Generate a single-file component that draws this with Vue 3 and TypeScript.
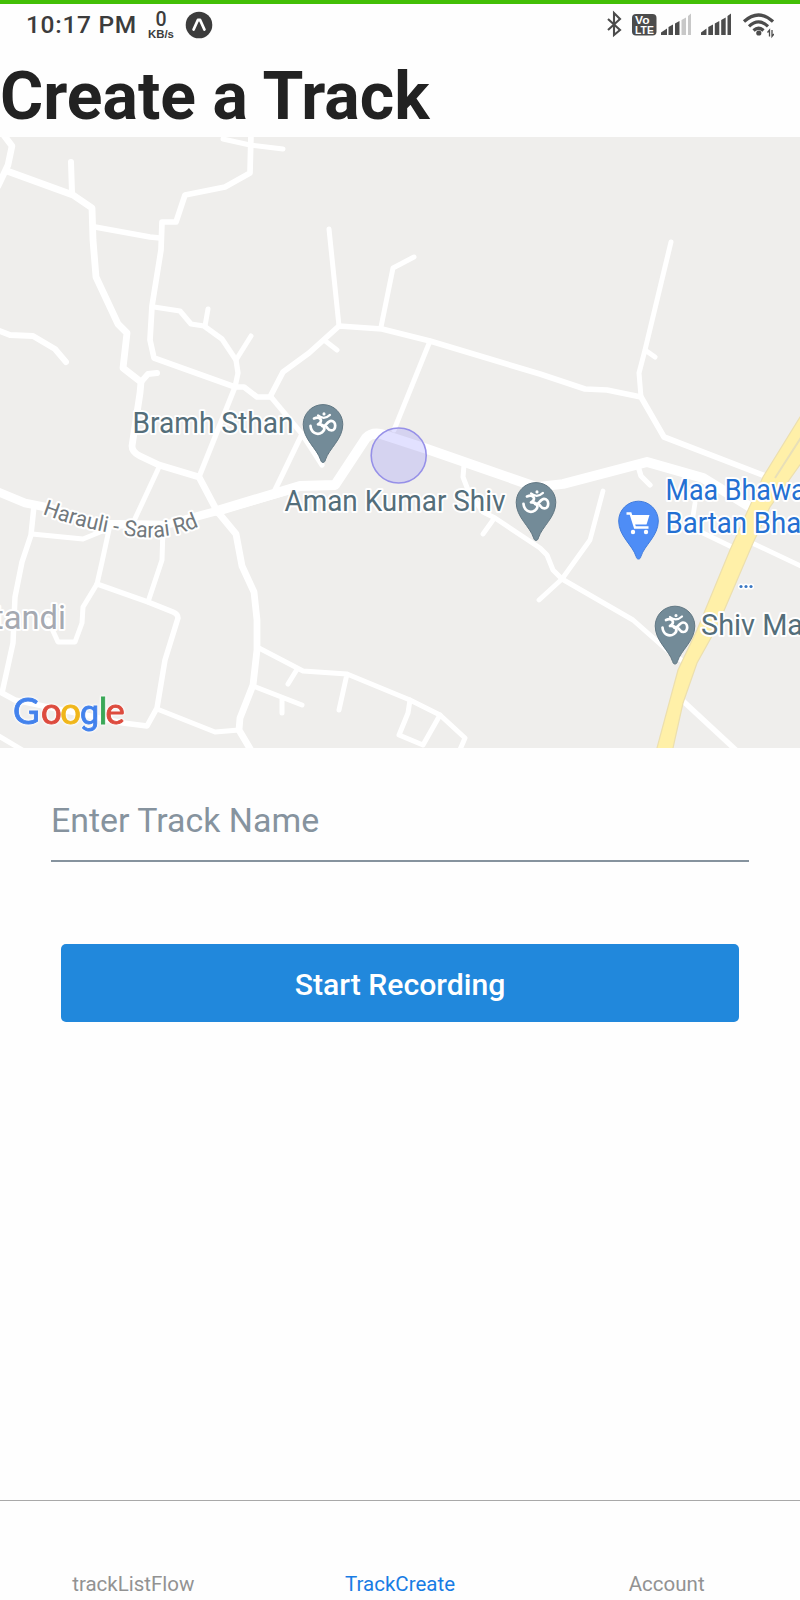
<script setup lang="ts">
import { ref } from 'vue'

interface Road { d: string; w: number }
interface Pin { x: number; y: number; kind: 'temple' | 'shop' }
interface Label { x: number; y: number; width?: number; text: string; tone: string }

const trackName = ref('')
const activeTab = ref('TrackCreate')
const tabs = ['trackListFlow', 'TrackCreate', 'Account']

const roads: Road[] = [
  { d: 'M3 134L12 146L8 165L-2 186', w: 6.5 },
  { d: 'M7 171L73 195L92 208L93 240L96 277L118 324L127 333L123 368L141 382L140 393L132 446Q132 452 140 456L159 465L199 477L217 511L236 534L242 566L254 592L257 620L257 650L253 685L240 718L239 730L252 752', w: 6.8 },
  { d: 'M71 162L72 193', w: 6 },
  { d: 'M141 382L148 374L157 373', w: 6 },
  { d: 'M95 227L150 237L160 238', w: 5.5 },
  { d: 'M251 134L250 173L225 187L185 195L176 222L162 222L161 250L152 306L150 340L154 358L235 387L244 387L257 397L270 397L283 372L309 353L339 326L382 329L430 341L540 374L585 389L607 390L641 397L664 437L768 477', w: 5.7 },
  { d: 'M223 139L250 145L283 149', w: 5 },
  { d: 'M154 307L180 311L191 324L204 326L222 339L236 360L238 373L235 387L199 477', w: 5.3 },
  { d: 'M205 326L208 309M236 360L251 336', w: 5 },
  { d: 'M-3 330L10 335L33 336L55 349L66 362', w: 6 },
  { d: 'M329 229L339 326M381 327L393 268L414 257M324 340L337 350M430 341L394 430', w: 5 },
  { d: 'M271 397L302 434L322 465M302 434L275 490', w: 5.2 },
  { d: 'M-4 491L25 503L50 508L100 524L165 525L217 511L290 490', w: 8.5 },
  { d: 'M217 511L250 501L300 486L335 485L366 438Q372 432 381 434L427 449L536 487L563 484L647 462L703 478L755 510', w: 9.8 },
  { d: 'M464 465L463 477L468 490L483 512L495 518L540 548L547 555L553 570L562 579L633 620L667 650L684 662', w: 5 },
  { d: 'M493 520L483 534M539 600L562 579L590 540L603 491', w: 4.8 },
  { d: 'M638 466L641 476L650 485', w: 5.3 },
  { d: 'M671 242L645 350L639 373L641 397M645 350L655 357', w: 5 },
  { d: 'M695 503L692 523L703 533L734 548M750 542L803 567', w: 4.8 },
  { d: 'M683 701L738 752', w: 5.5 },
  { d: 'M34 506L31 535L22 562L15 597L13 643L2 693L15 700L123 723L147 726L157 708L165 660L178 618Q178 614 173 612L148 602L97 584', w: 5.5 },
  { d: 'M48 620L58 642L75 642L82 623L83 607L97 584L102 562L110 525', w: 5 },
  { d: 'M32 534L83 539L105 530M160 465L133 523M163 528L162 560L148 602M157 709L215 732L239 730', w: 5 },
  { d: 'M-3 735L24 751', w: 5 },
  { d: 'M257 647L303 671L347 674L410 700L440 715L465 738L459 752M347 674L339 710M296 671L288 684', w: 5 },
  { d: 'M253 686L302 705M282 699L282 713M410 700L408 713L399 735L423 745L440 715', w: 5 },
]

const pins: Pin[] = [
  { x: 323, y: 424.4, kind: 'temple' },
  { x: 536, y: 502.4, kind: 'temple' },
  { x: 638.5, y: 521, kind: 'shop' },
  { x: 675, y: 626, kind: 'temple' },
]

const labels: Label[] = [
  { x: 132.5, y: 433, width: 161, text: 'Bramh Sthan', tone: 'place' },
  { x: 284.5, y: 511, width: 221, text: 'Aman Kumar Shiv', tone: 'place' },
  { x: 701, y: 634.5, width: 118, text: 'Shiv Man', tone: 'place' },
  { x: 665.5, y: 499.5, width: 155, text: 'Maa Bhawan', tone: 'shop' },
  { x: 665.5, y: 533, width: 151, text: 'Bartan Bhan', tone: 'shop' },
  { x: -7, y: 629, width: 73, text: 'tandi', tone: 'area' },
]
</script>

<template>
  <div class="screen">
    <header class="status">
      <div class="status-group">
        <span class="clock">10:17 PM</span>
        <span class="rate"><b>0</b><small>KB/s</small></span>
        <svg class="badge" width="28" height="28" viewBox="0 0 28 28">
          <circle cx="14" cy="14" r="13.3" fill="#3c3c3c" />
          <path d="M8.6 18.5L12.9 9H15.1L19.4 18.5" fill="none" stroke="#fff" stroke-width="2.8" stroke-linejoin="round" stroke-linecap="round" />
        </svg>
      </div>
      <svg class="signals" width="170" height="30" viewBox="604 10 170 30">
        <path d="M608 19L620 30L614 35V13L620 19L608 30" fill="none" stroke="#4c4c4c" stroke-width="2.1" />
        <rect x="632" y="14" width="24.5" height="21.500" rx="4" fill="#4c4c4c" />
        <text x="635" y="23.8" class="volte" textLength="14.500" lengthAdjust="spacingAndGlyphs">Vo</text>
        <text x="635" y="33.6" class="volte" textLength="18.800" lengthAdjust="spacingAndGlyphs">LTE</text>
        <g fill="#4c4c4c">
          <path d="M661 35V32.500L667 28.500V35ZM668.500 35V27L673 24.500V35ZM675 35V23.500L679.500 21V35Z" />
          <path d="M681.500 35V20L686 17.500V35ZM688 35V16L691 13.500V35Z" fill="#c8c8c8" />
          <path d="M701 35V32.500L706.500 28.500V35ZM708.300 35V27L713 24.500V35ZM714.800 35V23.500L719.300 21V35ZM721.200 35V20L725.700 17.500V35ZM727.500 35V16L731 13.500V35Z" />
        </g>
        <g fill="none" stroke="#4c4c4c" stroke-width="3.200">
          <path d="M744 21.500Q758.500 8.500 773 21.500" />
          <path d="M749 26.300Q758.500 17.500 768 26.300" />
          <path d="M753.500 30.500Q758.500 26 763.500 30.500" />
        </g>
        <circle cx="758.800" cy="33" r="2.600" fill="#4c4c4c" />
        <path d="M769.500 36.500V30L767.500 32.500M772 30V36.500L774 34" fill="none" stroke="#4c4c4c" stroke-width="1.300" />
      </svg>
    </header>

    <h1>Create a Track</h1>

    <svg class="map" width="800" height="611" viewBox="0 137 800 611">
      <defs>
        <path id="road-name" d="M42 514Q80 528 116 534T166 536Q184 534 204 524" />
        <g id="om" fill="none" stroke="#fff" stroke-width="2.700" stroke-linecap="round" stroke-linejoin="round">
          <path d="M-9 -6C-3 -8.500 1 -3.500 -5 0C2 -.5 3 5 -1 8C-6 11.500 -12 8 -12.500 1.500" />
          <path d="M-1 1.500C2 4 4 -3.500 8 -3.500C13.500 -3.500 13.500 6 8.500 6C5 6 4.500 3 3.500 2.500" />
          <path d="M-5 -9Q1 -4 7 -9.500" stroke-width="2.200" />
          <circle cx="1" cy="-10.500" r=".7" stroke-width="1.700" />
        </g>
      </defs>
      <rect x="0" y="137" width="800" height="611" fill="#efeeec" />
      <g fill="none" stroke="#fff" stroke-linecap="round" stroke-linejoin="round">
        <path v-for="(road, i) in roads" :key="i" :d="road.d" :stroke-width="road.w" />
      </g>
      <path d="M655 755L657 748L678 670L697 630L730 550L763 477L802 414V462L770 507L753 543L717 627L697 663L683 703L673 748L671 755Z" fill="#fff0a8" stroke="#ecdfae" stroke-width="1.200" />
      <path d="M775 478L802 436" stroke="#e8dfb8" stroke-width="2" />
      <circle cx="398.700" cy="455.500" r="27.500" fill="#7a78ff" fill-opacity=".22" stroke="#9690e8" stroke-width="1.600" />

      <g v-for="(pin, i) in pins" :key="'p' + i" :transform="`translate(${pin.x} ${pin.y})`">
        <path
          d="M0 38C-1.500 38 -2 37 -2.400 35.500C-6 24 -19.800 15 -19.800 0A19.800 19.800 0 0 1 19.800 0C19.800 15 6 24 2.400 35.500C2 37 1.500 38 0 38Z"
          :class="'pin-' + pin.kind"
        />
        <use v-if="pin.kind === 'temple'" href="#om" />
        <g v-else>
          <path d="M-12 -7.500H-8L-3.500 6.500H10" fill="none" stroke="#fff" stroke-width="2.300" />
          <path d="M-7.500 -6H11L8 3.500H-4.500Z" fill="#fff" />
          <circle cx="-5.500" cy="11" r="2.200" fill="#fff" />
          <circle cx="7.500" cy="11" r="2.200" fill="#fff" />
        </g>
      </g>

      <text
        v-for="label in labels" :key="label.text" :x="label.x" :y="label.y"
        :textLength="label.width" lengthAdjust="spacingAndGlyphs" :class="['label', label.tone]"
      >{{ label.text }}</text>
      <text class="label road"><textPath href="#road-name" textLength="162" lengthAdjust="spacingAndGlyphs">Harauli - Sarai Rd</textPath></text>
      <g fill="#3b78c4" stroke="#fff" stroke-width="3" paint-order="stroke">
        <circle cx="741" cy="586.500" r="1.600" /><circle cx="746" cy="586.500" r="1.600" /><circle cx="751" cy="586.500" r="1.600" />
      </g>
      <text class="brand" y="724.300"><tspan x="13" class="blue">G</tspan><tspan x="41" class="red">o</tspan><tspan x="60.300" class="yellow">o</tspan><tspan x="80" class="blue round-g">g</tspan><tspan x="98.800" class="green">l</tspan><tspan x="105.600" class="red">e</tspan></text>
    </svg>

    <main class="form">
      <input v-model="trackName" type="text" placeholder="Enter Track Name" />
      <button type="button">Start Recording</button>
    </main>

    <nav class="tabs">
      <a v-for="tab in tabs" :key="tab" :class="{ active: tab === activeTab }" @click="activeTab = tab">{{ tab }}</a>
    </nav>
  </div>
</template>

<style>
body { margin: 0; background: #fefefe; }
</style>

<style scoped>
.screen {
  display: flex;
  flex-direction: column;
  width: 800px;
  height: 1600px;
  overflow: hidden;
  background: #fefefe;
  font-family: Roboto, "Liberation Sans", sans-serif;
}
.status {
  box-sizing: border-box;
  display: flex;
  justify-content: space-between;
  align-items: center;
  height: 46px;
  padding: 0 26px 0 26px;
  border-top: 4px solid #43bf06;
}
.status-group { display: flex; align-items: center; height: 42px; }
.clock { font-size: 24.5px; line-height: 30px; font-weight: 500; color: #3c3c3c; letter-spacing: 0.7px; }
.rate { display: flex; flex-direction: column; align-items: center; width: 28px; margin-left: 10px; color: #3c3c3c; }
.rate b { font-size: 19.5px; line-height: 18px; font-weight: 500; }
.rate small { font: 700 11.4px/11px "Liberation Sans", sans-serif; }
.badge { margin-left: 10px; }
.volte { font: 700 10.5px "Liberation Sans", sans-serif; fill: #fff; }
h1 {
  height: 91px;
  margin: 0;
  font-size: 66.1px;
  line-height: 102px;
  font-weight: 700;
  color: #222;
  white-space: nowrap;
}
.map { display: block; flex: none; }
.pin-temple { fill: #738b98; stroke: #617783; stroke-width: 1; }
.pin-shop { fill: #4e8df6; stroke: #417cdd; stroke-width: 1; }
.label { font-size: 30px; stroke: #fff; stroke-width: 4px; stroke-linejoin: round; paint-order: stroke; }
.place { fill: #546e7a; }
.shop { fill: #2470d2; }
.area { font-size: 34px; fill: #a5a9b1; }
.road { font-size: 22px; fill: #72797d; }
.brand {
  font: 400 36.5px Lato, sans-serif;
  stroke-width: 0.9px;
  filter: drop-shadow(0 0 1px #fff) drop-shadow(0 0 1px #fff);
}
.round-g { font-family: Roboto, sans-serif; font-size: 34px; }
.blue { fill: #4382ec; stroke: #4382ec; }
.red { fill: #dd4b3e; stroke: #dd4b3e; }
.yellow { fill: #f0b61a; stroke: #f0b61a; }
.green { fill: #3aa757; stroke: #3aa757; }
.form { display: flex; flex-direction: column; flex: 1; padding: 0 51px; }
input {
  box-sizing: border-box;
  height: 84px;
  margin-top: 30px;
  padding: 3px 0 0;
  border: 0;
  border-bottom: 2px solid #86939e;
  outline: 0;
  background: transparent;
  font: 400 33.9px Roboto, sans-serif;
  color: #222;
}
input::placeholder { color: #86939e; opacity: 1; }
button {
  height: 78px;
  margin: 82px 10px 0;
  padding: 2px 0 0;
  border: 0;
  border-radius: 5px;
  background: #2188dc;
  color: #fff;
  font: 500 30.2px Roboto, sans-serif;
}
.tabs { display: flex; box-sizing: border-box; height: 100px; border-top: 1px solid #a9a9a9; }
.tabs a {
  flex: 1;
  padding-top: 71px;
  font-size: 20.5px;
  line-height: 24px;
  text-align: center;
  color: #929292;
}
.tabs a.active { color: #187ce4; }
</style>
